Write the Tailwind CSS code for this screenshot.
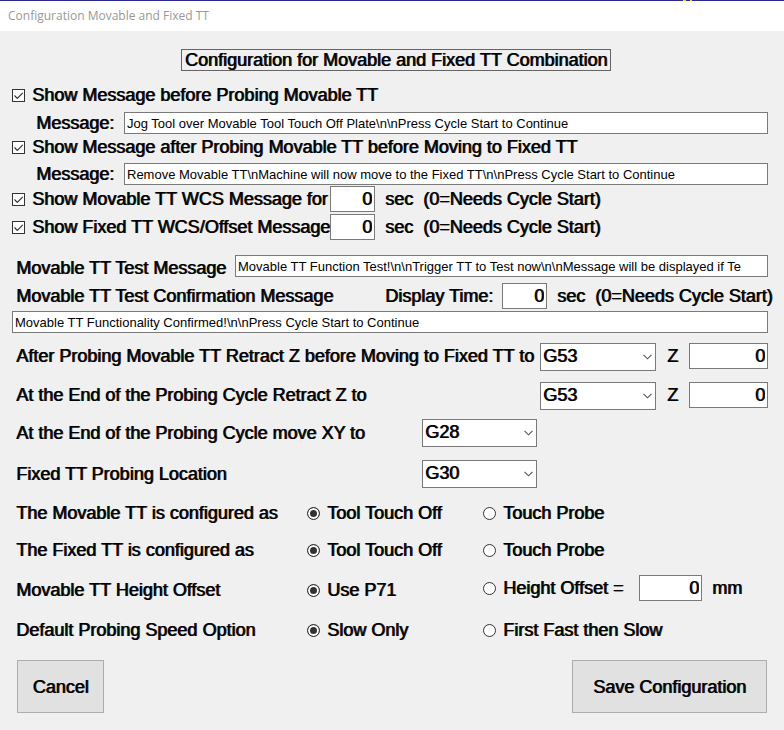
<!DOCTYPE html>
<html lang="en">
<head>
<meta charset="utf-8">
<meta name="viewport" content="width=device-width, initial-scale=1">
<title>Configuration Movable and Fixed TT</title>
<script src="https://cdn.jsdelivr.net/npm/@tailwindcss/browser@4"></script>
</head>
<body class="min-h-screen bg-[#f0f0f0] font-['Liberation_Sans',Arial,sans-serif] text-[18px] leading-[22px] text-black">
<svg class="hidden" aria-hidden="true">
  <symbol id="tick" viewBox="0 0 13 13"><path d="M2.5 6.5 L5.3 9.3 L10.8 3.8" fill="none" stroke="#333" stroke-width="1.2"/></symbol>
  <symbol id="chevron" viewBox="0 0 9 6"><path d="M0.5 0.8 L4.5 4.8 L8.5 0.8" fill="none" stroke="#555" stroke-width="1.1"/></symbol>
</svg>

<header class="relative flex h-[31px] items-center border-t border-[#2b2a8c] bg-white px-2">
  <span class="font-['Open_Sans','Noto_Sans',sans-serif] text-[12px] leading-4 text-[#999]">Configuration Movable and Fixed TT</span>
  <span class="absolute -top-px right-[92px] flex gap-1"><i class="h-px w-[3px] bg-[#e6dc28]"></i><i class="h-px w-[2px] bg-[#e6dc28]"></i></span>
</header>

<form class="flex flex-col px-3 whitespace-nowrap [text-shadow:1px_0_0_rgb(0_0_0/0.85)]">
  <h1 class="mt-[18px] ml-2 self-center border border-[#646464] px-[3px] leading-5">Configuration for Movable and Fixed TT Combination</h1>

  <label class="mt-[13px] flex items-center gap-[7px]">
    <span class="grid size-[13px]"><input type="checkbox" checked class="peer col-start-1 row-start-1 size-[13px] appearance-none border border-[#333] bg-white"><svg class="pointer-events-none invisible col-start-1 row-start-1 size-[13px] peer-checked:visible"><use href="#tick"/></svg></span>
    Show Message before Probing Movable TT
  </label>
  <div class="mt-[6px] mr-1 flex items-center">
    <label for="m1" class="w-28 shrink-0 pl-6">Message:</label>
    <input id="m1" type="text" class="h-[22px] min-w-0 flex-1 border border-[#7a7a7a] bg-white px-[2px] pt-px text-[13px] [text-shadow:none]" value="Jog Tool over Movable Tool Touch Off Plate\n\nPress Cycle Start to Continue">
  </div>
  <label class="mt-[2px] flex items-center gap-[7px]">
    <span class="grid size-[13px]"><input type="checkbox" checked class="peer col-start-1 row-start-1 size-[13px] appearance-none border border-[#333] bg-white"><svg class="pointer-events-none invisible col-start-1 row-start-1 size-[13px] peer-checked:visible"><use href="#tick"/></svg></span>
    Show Message after Probing Movable TT before Moving to Fixed TT
  </label>
  <div class="mt-[5px] mr-1 flex items-center">
    <label for="m2" class="w-28 shrink-0 pl-6">Message:</label>
    <input id="m2" type="text" class="h-[22px] min-w-0 flex-1 border border-[#7a7a7a] bg-white px-[2px] pt-px text-[13px] [text-shadow:none]" value="Remove Movable TT\nMachine will now move to the Fixed TT\n\nPress Cycle Start to Continue">
  </div>

  <div class="mt-px flex items-center">
    <label class="flex w-[318px] items-center gap-[7px]">
      <span class="grid size-[13px]"><input type="checkbox" checked class="peer col-start-1 row-start-1 size-[13px] appearance-none border border-[#333] bg-white"><svg class="pointer-events-none invisible col-start-1 row-start-1 size-[13px] peer-checked:visible"><use href="#tick"/></svg></span>
      Show Movable TT WCS Message for
    </label>
    <input type="text" aria-label="Movable TT message seconds" class="h-[26px] w-[45px] border border-[#7a7a7a] bg-white px-[2px] text-right [text-shadow:inherit]" value="0">
    <span class="ml-[10px] flex gap-[10px]"><span>sec</span><span>(0=Needs Cycle Start)</span></span>
  </div>
  <div class="mt-[2px] flex items-center">
    <label class="flex w-[318px] items-center gap-[7px]">
      <span class="grid size-[13px]"><input type="checkbox" checked class="peer col-start-1 row-start-1 size-[13px] appearance-none border border-[#333] bg-white"><svg class="pointer-events-none invisible col-start-1 row-start-1 size-[13px] peer-checked:visible"><use href="#tick"/></svg></span>
      Show Fixed TT WCS/Offset Message
    </label>
    <input type="text" aria-label="Fixed TT message seconds" class="h-[26px] w-[45px] border border-[#7a7a7a] bg-white px-[2px] text-right [text-shadow:inherit]" value="0">
    <span class="ml-[10px] flex gap-[10px]"><span>sec</span><span>(0=Needs Cycle Start)</span></span>
  </div>

  <div class="mt-[15px] mr-1 flex items-start">
    <label for="tm" class="w-[223px] shrink-0 pl-1 leading-[26px]">Movable TT Test Message</label>
    <input id="tm" type="text" class="h-[22px] min-w-0 flex-1 border border-[#7a7a7a] bg-white px-[2px] pt-px text-[13px] [text-shadow:none]" value="Movable TT Function Test!\n\nTrigger TT to Test now\n\nMessage will be displayed if Te">
  </div>
  <div class="mt-[2px] flex items-center">
    <label for="tc" class="w-[373px] shrink-0 pl-1">Movable TT Test Confirmation Message</label>
    <label for="dt" class="w-[117px] shrink-0">Display Time:</label>
    <input id="dt" type="text" class="h-[26px] w-[45px] shrink-0 border border-[#7a7a7a] bg-white px-[2px] text-right [text-shadow:inherit]" value="0">
    <span class="ml-[10px] flex gap-[10px]"><span>sec</span><span>(0=Needs Cycle Start)</span></span>
  </div>
  <div class="mt-[2px] mr-1 flex">
    <input id="tc" type="text" class="h-[22px] min-w-0 flex-1 border border-[#7a7a7a] bg-white px-[2px] pt-px text-[13px] [text-shadow:none]" value="Movable TT Functionality Confirmed!\n\nPress Cycle Start to Continue">
  </div>

  <div class="mt-[10px] mr-1 flex items-start">
    <label for="r1" class="flex-1 pl-1 leading-[26px]">After Probing Movable TT Retract Z before Moving to Fixed TT to</label>
    <span class="grid w-[116px] items-center">
      <select id="r1" class="col-start-1 row-start-1 h-7 appearance-none border border-[#7a7a7a] bg-white pr-6 pb-[2px] pl-[2px] [text-shadow:inherit]"><option>G53</option><option>G28</option><option>G30</option></select>
      <svg class="pointer-events-none col-start-1 row-start-1 mr-1 h-[6px] w-[9px] justify-self-end"><use href="#chevron"/></svg>
    </span>
    <label for="z1" class="w-[33px] text-center leading-[26px]">Z</label>
    <input id="z1" type="text" class="h-[26px] w-[79px] border border-[#7a7a7a] bg-white px-[2px] text-right [text-shadow:inherit]" value="0">
  </div>
  <div class="mt-[11px] mr-1 flex items-start">
    <label for="r2" class="flex-1 pl-1 leading-[26px]">At the End of the Probing Cycle Retract Z to</label>
    <span class="grid w-[116px] items-center">
      <select id="r2" class="col-start-1 row-start-1 h-7 appearance-none border border-[#7a7a7a] bg-white pr-6 pb-[2px] pl-[2px] [text-shadow:inherit]"><option>G53</option><option>G28</option><option>G30</option></select>
      <svg class="pointer-events-none col-start-1 row-start-1 mr-1 h-[6px] w-[9px] justify-self-end"><use href="#chevron"/></svg>
    </span>
    <label for="z2" class="w-[33px] text-center leading-[26px]">Z</label>
    <input id="z2" type="text" class="h-[26px] w-[79px] border border-[#7a7a7a] bg-white px-[2px] text-right [text-shadow:inherit]" value="0">
  </div>
  <div class="mt-[9px] flex items-center">
    <label for="xy" class="w-[410px] pl-1">At the End of the Probing Cycle move XY to</label>
    <span class="grid w-[115px] items-center">
      <select id="xy" class="col-start-1 row-start-1 h-7 appearance-none border border-[#7a7a7a] bg-white pr-6 pb-[2px] pl-[2px] [text-shadow:inherit]"><option>G28</option><option>G30</option><option>G53</option></select>
      <svg class="pointer-events-none col-start-1 row-start-1 mr-1 h-[6px] w-[9px] justify-self-end"><use href="#chevron"/></svg>
    </span>
  </div>
  <div class="mt-[13px] flex items-center">
    <label for="loc" class="w-[410px] pl-1">Fixed TT Probing Location</label>
    <span class="grid w-[115px] items-center">
      <select id="loc" class="col-start-1 row-start-1 h-7 appearance-none border border-[#7a7a7a] bg-white pr-6 pb-[2px] pl-[2px] [text-shadow:inherit]"><option>G30</option><option>G28</option><option>G53</option></select>
      <svg class="pointer-events-none col-start-1 row-start-1 mr-1 h-[6px] w-[9px] justify-self-end"><use href="#chevron"/></svg>
    </span>
  </div>

  <div role="radiogroup" aria-labelledby="g1" class="mt-[12px] flex h-[26px] items-center">
    <span id="g1" class="w-[295px] pl-1">The Movable TT is configured as</span>
    <label class="flex w-[176px] items-center gap-[7px]"><input type="radio" name="g1" checked class="size-[13px] appearance-none rounded-full border border-[#333] bg-white checked:bg-[#333] checked:shadow-[inset_0_0_0_2px_#fff]">Tool Touch Off</label>
    <label class="flex items-center gap-[7px]"><input type="radio" name="g1" class="size-[13px] appearance-none rounded-full border border-[#333] bg-white checked:bg-[#333] checked:shadow-[inset_0_0_0_2px_#fff]">Touch Probe</label>
  </div>
  <div role="radiogroup" aria-labelledby="g2" class="mt-[11px] flex h-[26px] items-center">
    <span id="g2" class="w-[295px] pl-1">The Fixed TT is configured as</span>
    <label class="flex w-[176px] items-center gap-[7px]"><input type="radio" name="g2" checked class="size-[13px] appearance-none rounded-full border border-[#333] bg-white checked:bg-[#333] checked:shadow-[inset_0_0_0_2px_#fff]">Tool Touch Off</label>
    <label class="flex items-center gap-[7px]"><input type="radio" name="g2" class="size-[13px] appearance-none rounded-full border border-[#333] bg-white checked:bg-[#333] checked:shadow-[inset_0_0_0_2px_#fff]">Touch Probe</label>
  </div>
  <div role="radiogroup" aria-labelledby="g3" class="mt-[12px] flex items-start">
    <span id="g3" class="w-[295px] pl-1 leading-[30px]">Movable TT Height Offset</span>
    <label class="flex w-[176px] items-center gap-[7px] leading-[30px]"><input type="radio" name="g3" checked class="size-[13px] appearance-none rounded-full border border-[#333] bg-white checked:bg-[#333] checked:shadow-[inset_0_0_0_2px_#fff]">Use P71</label>
    <label class="flex w-[156px] items-center gap-[7px] leading-[26px]"><input type="radio" name="g3" class="size-[13px] appearance-none rounded-full border border-[#333] bg-white checked:bg-[#333] checked:shadow-[inset_0_0_0_2px_#fff]">Height Offset =</label>
    <input type="text" aria-label="Height offset in mm" class="h-[26px] w-[63px] border border-[#7a7a7a] bg-white px-[2px] text-right [text-shadow:inherit]" value="0">
    <span class="ml-[10px] leading-[26px]">mm</span>
  </div>
  <div role="radiogroup" aria-labelledby="g4" class="mt-[12px] flex h-[26px] items-center">
    <span id="g4" class="w-[295px] pl-1">Default Probing Speed Option</span>
    <label class="flex w-[176px] items-center gap-[7px]"><input type="radio" name="g4" checked class="size-[13px] appearance-none rounded-full border border-[#333] bg-white checked:bg-[#333] checked:shadow-[inset_0_0_0_2px_#fff]">Slow Only</label>
    <label class="flex items-center gap-[7px]"><input type="radio" name="g4" class="size-[13px] appearance-none rounded-full border border-[#333] bg-white checked:bg-[#333] checked:shadow-[inset_0_0_0_2px_#fff]">First Fast then Slow</label>
  </div>

  <div class="mt-[17px] mr-[5px] mb-4 ml-[5px] flex justify-between">
    <button type="button" class="h-[53px] w-[87px] border border-[#adadad] bg-[#e1e1e1] [text-shadow:inherit]">Cancel</button>
    <button type="submit" class="h-[53px] w-[195px] border border-[#adadad] bg-[#e1e1e1] [text-shadow:inherit]">Save Configuration</button>
  </div>
</form>
</body>
</html>
